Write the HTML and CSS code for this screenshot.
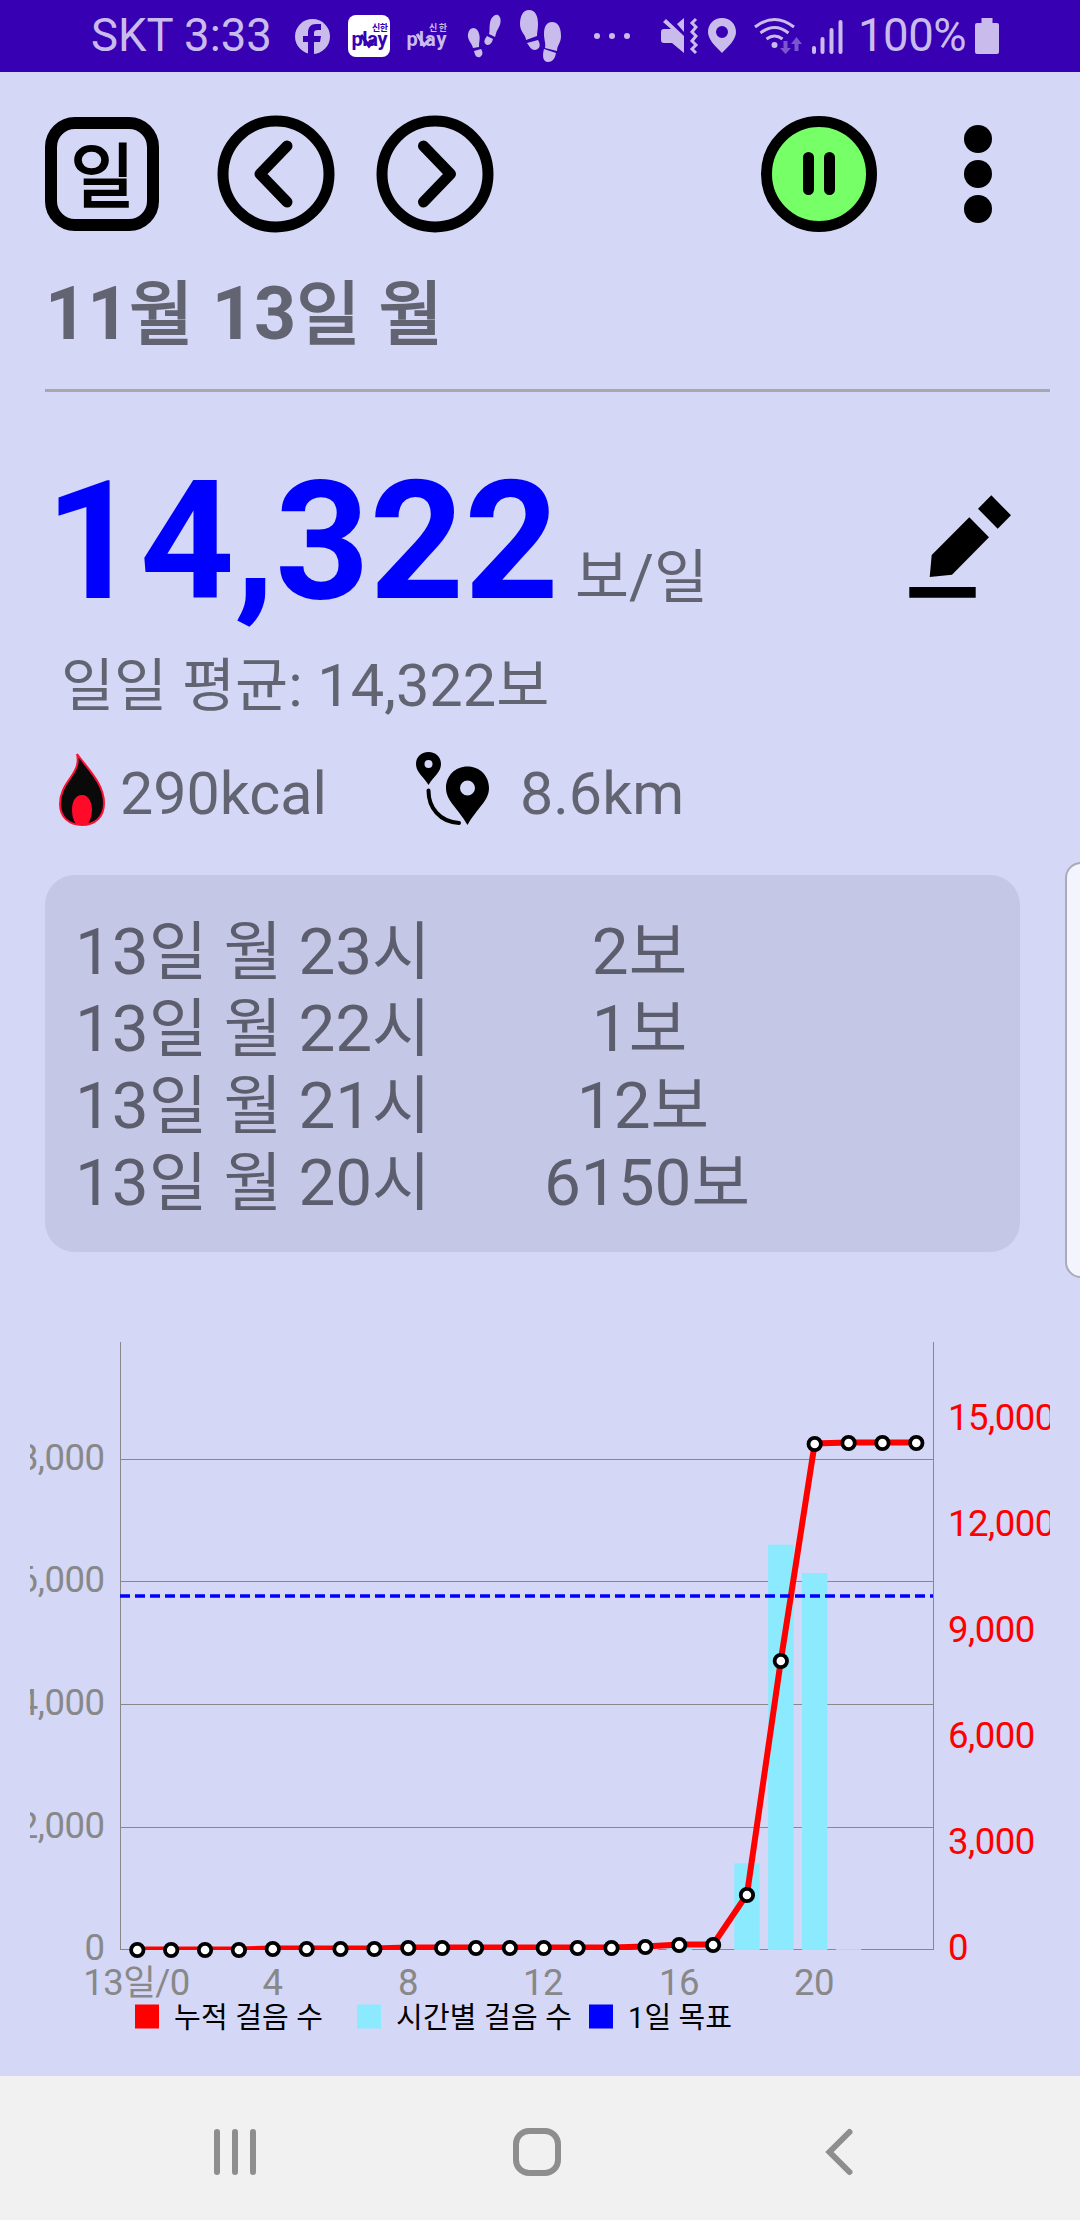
FILE: index.html
```html
<!DOCTYPE html>
<html lang="ko">
<head>
    <meta charset="UTF-8">
    <meta name="viewport" content="width=device-width, initial-scale=1.0">
    <title>만보기</title>
    <link rel="stylesheet" href="styles.css">
</head>
<body>
    <header class="status-bar">
        <span class="carrier">SKT 3:33</span>
        <svg class="status-icons" width="340" height="72" viewBox="290 0 340 72">
            <circle cx="312.500" cy="36.500" r="17.500"/>
            <path class="cut" d="M308 55V42h-5v-6h5v-3c0-6 3-9 8-9h5v6h-3c-3 0-4 1-4 3v3h7l-1 6h-6v13z"/>
            <rect class="badge" x="348" y="15" width="42" height="42" rx="8"/>
            <text class="logo-small cut" x="372" y="30.500" textLength="16">신한</text>
            <text class="logo cut" x="351.500" y="46" textLength="36">play</text>
            <path class="cut-line" d="M361 35l8 11 6-7"/>
            <text class="logo-small" x="429" y="30.500" textLength="18">신한</text>
            <text class="logo" x="406.500" y="46" textLength="40">play</text>
            <path class="logo-line" d="M417 34l7 11 7-7"/>
            <path d="M468 34c1-7 7-8 10-3 3 6 1 10 1 16l-6 1c-1-5-6-8-5-14z"/>
            <path d="M474 51l7-2c2 3 2 6-1 8-4 1-5-2-6-6z"/>
            <path d="M490 23c1-6 5-9 8-8 4 3 3 9 0 14-2 3-2 5-3 8l-6-3c1-3 0-6 1-11z"/>
            <path d="M487 36l6 3c-1 4-3 6-6 6-4-2-3-5 0-9z"/>
            <path d="M520 24c0-8 3-14 9-14 7 0 9 7 9 14 0 5-1 8-1 12l-11 4c0-5-6-8-6-16z"/>
            <path d="M527 43l11-3c3 5 2 9-3 10-4 0-5-3-8-7z"/>
            <path d="M544 34c0-8 3-12 8-12s9 4 9 14c0 7-4 9-4 15l-12-3c1-5-1-8-1-14z"/>
            <path d="M544 49l12 4c-1 6-4 9-8 9-5 0-6-6-4-13z"/>
            <circle cx="597" cy="36" r="3"/>
            <circle cx="612" cy="36" r="3"/>
            <circle cx="627" cy="36" r="3"/>
        </svg>
        <svg class="status-icons status-right" width="186" height="72" viewBox="658 0 186 72">
            <path d="M661 32q0-3 3-3h7l-8-7 3-3 18 17v17l-12-10h-8q-3 0-3-3z"/>
            <path d="M677 24l7-6v14z"/>
            <path class="line" d="M696 19l-4 4 4 4-4 5 4 4-4 5 4 4-4 4 4 4"/>
            <path fill-rule="evenodd" d="M722 18c8 0 14 6 14 14 0 7-6 13-14 21-8-8-14-14-14-21 0-8 6-14 14-14zm0 8a6 6 0 1 0 0 12 6 6 0 0 0 0-12z"/>
            <path class="line" d="M755 27q19.500-15 39 0M760.500 33q14-11 28 0M766.500 39q8-6 16 0"/>
            <circle cx="774.500" cy="45" r="3"/>
            <path class="faint" d="M783.500 41h4v7h3.500l-5.500 6-5.500-6h3.500zM794.500 51h4v-7h3.500l-5.500-7-5.500 7h3.500z"/>
            <path class="signal" d="M814 48v4M822.500 39v13M831.500 30v22M840.500 22v30"/>
        </svg>
        <span class="percent">100%</span>
        <svg class="status-icons" width="24" height="72" viewBox="975 0 24 72">
            <path d="M981.500 18h11v5h4.500q2 0 2 2v27q0 2-2 2h-20q-2 0-2-2V25q0-2 2-2h4.500z"/>
        </svg>
    </header>

    <main class="app">
        <div class="toolbar">
            <button class="day-button">일</button>
            <button class="icon-button prev-button">
                <svg width="118" height="118" viewBox="0 0 118 118">
                    <circle cx="59" cy="59" r="53"/>
                    <path d="M70 31L43 59l27 28"/>
                </svg>
            </button>
            <button class="icon-button">
                <svg width="118" height="118" viewBox="0 0 118 118">
                    <circle cx="59" cy="59" r="53"/>
                    <path d="M47.500 31l27 28-27 28"/>
                </svg>
            </button>
            <button class="icon-button pause-button">
                <svg width="118" height="118" viewBox="0 0 118 118">
                    <circle class="green" cx="59" cy="59" r="52.500"/>
                    <path d="M48.500 42.500v32M69.500 42.500v32"/>
                </svg>
            </button>
            <button class="icon-button menu-button">
                <svg width="30" height="100" viewBox="0 0 30 100">
                    <circle cx="15" cy="15" r="14"/>
                    <circle cx="15" cy="50" r="14"/>
                    <circle cx="15" cy="85" r="14"/>
                </svg>
            </button>
        </div>

        <h1 class="date">11<span class="ko">월</span> 13<span class="ko">일</span> <span class="ko">월</span></h1>

        <section class="summary">
            <div class="steps-row">
                <strong class="steps">14,322</strong>
                <span class="unit"><span class="ko">보</span>/<span class="ko">일</span></span>
                <svg class="edit" width="104" height="104" viewBox="0 0 104 104">
                    <path d="M83.300 1.300l19.700 20-13.300 13.400-19.700-20zM61.300 23.300l19.700 20-37 37.400L21.700 83l2-22zM1.300 93h66.400v10.700H1.300z"/>
                </svg>
            </div>
            <p class="average"><span class="ko">일일</span> <span class="ko">평균</span>: 14,322<span class="ko">보</span></p>
            <div class="metrics">
                <svg class="flame" width="46" height="74" viewBox="0 0 46 74">
                    <path class="flame-outer" d="M18 2c11 15 27 30 27 49 0 14-9 22-22 22S1 65 1 52c0-23 22-30 17-50z"/>
                    <path class="flame-inner" d="M23 43c7 0 10 8 10 15 0 6-2 10-4 14q-6 2-12 0c-3-4-4-9-4-14 0-8 3-15 10-15z"/>
                </svg>
                <span class="metric kcal">290kcal</span>
                <svg class="route" width="74" height="74" viewBox="0 0 74 74">
                    <path fill-rule="evenodd" d="M12.500 0C20 0 25 5 25 12c0 8-7 12-12.500 21C7 24 0 20 0 12 0 5 5 0 12.500 0zm0 8a4 4 0 1 0 0 8 4 4 0 0 0 0-8z"/>
                    <path fill-rule="evenodd" d="M51.500 14.500C64 14.500 73 24 73 36c0 13-12 20-21.500 37C42 56 30 49 30 36c0-12 9-21.500 21.500-21.500zm0 14a7.500 7.500 0 1 0 0 15 7.500 7.500 0 0 0 0-15z"/>
                    <path class="route-line" d="M12.500 38.500C12.500 56 24 70 43 71"/>
                </svg>
                <span class="metric">8.6km</span>
            </div>
        </section>

        <section class="hours">
            <div class="hour"><span>13<span class="ko">일</span> <span class="ko">월</span> 23<span class="ko">시</span></span><span class="count one-digit">2<span class="ko">보</span></span></div>
            <div class="hour"><span>13<span class="ko">일</span> <span class="ko">월</span> 22<span class="ko">시</span></span><span class="count one-digit">1<span class="ko">보</span></span></div>
            <div class="hour"><span>13<span class="ko">일</span> <span class="ko">월</span> 21<span class="ko">시</span></span><span class="count two-digits">12<span class="ko">보</span></span></div>
            <div class="hour"><span>13<span class="ko">일</span> <span class="ko">월</span> 20<span class="ko">시</span></span><span class="count four-digits">6150<span class="ko">보</span></span></div>
        </section>

        <!-- viewBox keeps the chart in page units, starting at the left edge of the labels -->
        <svg class="chart" width="1020" height="720" viewBox="30 1330 1020 720">
            <defs>
                <clipPath id="plot"><rect x="120" y="1342" width="814" height="608"/></clipPath>
            </defs>
            <path class="grid" d="M120 1459.500h813M120 1581.500h813M120 1704.500h813M120 1827.500h813M120 1949.500h813M120.500 1342v608M933.500 1342v608"/>
            <g id="bars" class="bars"></g>
            <polyline id="total" class="total" clip-path="url(#plot)"/>
            <path class="goal" d="M120 1596h813"/>
            <g id="dots" class="dots"></g>
            <g class="left-axis">
                <text x="104.500" y="1470">8,000</text>
                <text x="104.500" y="1592">6,000</text>
                <text x="104.500" y="1715">4,000</text>
                <text x="104.500" y="1838">2,000</text>
                <text x="104.500" y="1960">0</text>
            </g>
            <g class="right-axis">
                <text x="948" y="1430">15,000</text>
                <text x="948" y="1536">12,000</text>
                <text x="948" y="1642">9,000</text>
                <text x="948" y="1748">6,000</text>
                <text x="948" y="1854">3,000</text>
                <text x="948" y="1960">0</text>
            </g>
            <g class="x-axis">
                <text x="136.500" y="1995">13<tspan class="ko">일</tspan>/0</text>
                <text x="272.500" y="1995">4</text>
                <text x="408" y="1995">8</text>
                <text x="543" y="1995">12</text>
                <text x="679" y="1995">16</text>
                <text x="814" y="1995">20</text>
            </g>
            <g class="legend">
                <rect x="135" y="2004.500" width="24" height="24" fill="#ff0000"/>
                <text x="174" y="2027.500" textLength="149">누적 걸음 수</text>
                <rect x="357" y="2004.500" width="24" height="24" fill="#8ceaff"/>
                <text x="396" y="2027.500" textLength="176">시간별 걸음 수</text>
                <rect x="589" y="2004.500" width="24" height="24" fill="#0000ff"/>
                <text x="628" y="2027.500" textLength="104">1일 목표</text>
            </g>
        </svg>
        <div class="edge-panel"></div>
    </main>

    <nav class="nav-bar">
        <svg width="1080" height="144" viewBox="0 2076 1080 144">
            <path d="M217 2132v40M235 2132v40M253 2132v40"/>
            <rect x="516" y="2131" width="42" height="42" rx="13"/>
            <path d="M849.500 2132l-20 20 20 20"/>
        </svg>
    </nav>

    <script>
        // y position of the running total for each hour
        const totals = [1950, 1950, 1950, 1950, 1949, 1949, 1949, 1949, 1948, 1948, 1948, 1948,
            1948, 1948, 1948, 1947, 1945, 1945, 1895, 1661, 1444, 1443, 1443, 1443];
        // top of the hourly bars
        const hourly = { 15: 1949, 16: 1947.5, 18: 1863.3, 19: 1544.7, 20: 1573, 21: 1949 };

        const ns = 'http://www.w3.org/2000/svg';
        const hourX = (hour) => 137.3 + hour * 33.87;

        function add(parent, name, attrs) {
            const el = document.createElementNS(ns, name);
            for (const key in attrs) el.setAttribute(key, attrs[key]);
            document.getElementById(parent).appendChild(el);
        }

        for (const hour in hourly) {
            add('bars', 'rect', { x: hourX(Number(hour)) - 12.7, y: hourly[hour], width: 25.4, height: 1950 - hourly[hour] });
        }

        document.getElementById('total').setAttribute('points',
            totals.map((y, hour) => `${hourX(hour)},${y - 0.5}`).join(' '));

        totals.forEach((y, hour) => add('dots', 'circle', { cx: hourX(hour), cy: y, r: 6.2 }));
    </script>
</body>
</html>
```

FILE: styles.css
```css
body {
    margin: 0;
    width: 1080px;
    height: 2220px;
    overflow: hidden;
    display: flex;
    flex-direction: column;
    background-color: #d4d7f6;
    font-family: Roboto, "Noto Sans CJK KR", sans-serif;
    color: #636472;
}
svg {
    display: block;
    flex: none;
}
.ko {
    font-size: 0.97em;
}
.status-bar {
    display: flex;
    align-items: center;
    height: 72px;
    flex: none;
    background-color: #3700b3;
    color: #c9bcec;
    font-size: 45.5px;
    line-height: 72px;
    white-space: nowrap;
}
.carrier {
    margin-left: 91px;
    width: 199px;
}
.status-icons {
    fill: #c9bcec;
}
.status-right {
    margin-left: 28px;
}
.percent {
    margin-left: 14px;
    width: 117px;
    letter-spacing: -0.5px;
}
.status-icons .cut {
    fill: #3700b3;
}
.badge {
    fill: #ffffff;
}
.logo {
    font-size: 20px;
    font-weight: bold;
}
.logo-small {
    font-size: 9px;
    font-weight: bold;
}
.cut-line, .logo-line {
    fill: none;
    stroke: #3700b3;
    stroke-width: 3;
}
.logo-line {
    stroke: #c9bcec;
}
.line {
    fill: none;
    stroke: #c9bcec;
    stroke-width: 3;
}
.faint {
    fill: #7b54cf;
}
.signal {
    stroke: #c9bcec;
    stroke-width: 4;
    stroke-linecap: round;
}
.app {
    position: relative;
    height: 2004px;
    flex: none;
    overflow: hidden;
}
.toolbar {
    display: flex;
    align-items: center;
    height: 118px;
    padding: 43px 0 0 45px;
}
.toolbar button {
    flex: none;
    padding: 0;
    background: none;
    color: #000;
    font-family: inherit;
}
.toolbar .day-button {
    box-sizing: border-box;
    width: 114px;
    height: 114px;
    padding: 8px 0 0 1px;
    border: 12px solid #000;
    border-radius: 30px;
    font-size: 70px;
    line-height: 82px;
    -webkit-text-stroke: 2px #000;
}
.icon-button {
    border: none;
    fill: none;
    stroke: #000;
    stroke-width: 11;
    stroke-linecap: round;
    stroke-linejoin: round;
}
.prev-button {
    margin: 0 41px 0 58px;
}
.pause-button {
    margin-left: 266px;
}
.green {
    fill: #76ff66;
}
.menu-button {
    margin-left: 85px;
    fill: #000;
    stroke: none;
}
.date {
    margin: 0 30px 0 45px;
    padding-top: 36px;
    height: 120px;
    border-bottom: 3px solid #a8a8a8;
    font-size: 73.5px;
    line-height: 90px;
    font-weight: bold;
}
.date .ko {
    font-size: 0.95em;
    font-weight: normal;
    -webkit-text-stroke: 2px #636472;
}
.summary {
    padding-left: 45px;
}
.steps-row {
    display: flex;
    align-items: baseline;
    height: 240px;
}
.steps {
    font-size: 165px;
    line-height: 299px;
    color: #0000ff;
}
.unit {
    margin-left: 16px;
    font-size: 60.5px;
}
.edit {
    margin-left: auto;
    margin-right: 68px;
}
.average {
    margin: 0 0 0 16px;
    font-size: 59.5px;
    line-height: 108px;
    height: 108px;
}
.metrics {
    display: flex;
    align-items: center;
    height: 98px;
    padding-left: 14px;
    font-size: 59.2px;
}
.metric {
    padding-top: 8px;
}
.kcal {
    margin-left: 15px;
    width: 296px;
}
.flame-outer {
    fill: #0a0a0a;
    stroke: #ff1035;
    stroke-width: 2;
}
.flame-inner {
    fill: #ff0a28;
}
.route-line {
    fill: none;
    stroke: #000;
    stroke-width: 4;
    stroke-linecap: round;
}
.route {
    margin-right: 30px;
}
.hours {
    box-sizing: border-box;
    width: 975px;
    height: 377px;
    margin: 37px 0 0 45px;
    padding: 38px 30px;
    border-radius: 30px;
    background-color: #c4c7e6;
    color: #5c5d6d;
    font-size: 65.6px;
    line-height: 77px;
}
.hour {
    display: grid;
    grid-template-columns: 400px 340px;
    height: 77px;
}
.count {
    text-align: center;
}
.one-digit {
    padding-right: 11px;
}
.two-digits {
    padding-right: 4px;
}
.four-digits {
    padding-left: 4px;
}
.chart {
    margin: 78px 0 0 30px;
    overflow: hidden;
    font-size: 36.5px;
    letter-spacing: -0.5px;
}
.grid {
    fill: none;
    stroke: #888888;
    stroke-width: 1;
}
.bars {
    fill: #8ceaff;
}
.total {
    fill: none;
    stroke: #ff0000;
    stroke-width: 6;
}
.goal {
    fill: none;
    stroke: #0000ff;
    stroke-width: 3.4;
    stroke-dasharray: 10 5;
}
.dots {
    fill: #ffffff;
    stroke: #000000;
    stroke-width: 3.8;
}
.left-axis {
    fill: #888888;
    text-anchor: end;
}
.right-axis {
    fill: #ff0000;
}
.x-axis {
    fill: #888888;
    text-anchor: middle;
}
.legend {
    font-size: 29px;
    letter-spacing: 0;
    fill: #000000;
}
.edge-panel {
    position: absolute;
    left: 1065px;
    top: 790px;
    width: 40px;
    height: 412px;
    border: 2px solid #aaabb8;
    border-radius: 16px;
    background-color: #f4f4fe;
}
.nav-bar {
    height: 144px;
    flex: none;
    background-color: #f1f1f1;
    fill: none;
    stroke: #8e8e8e;
    stroke-width: 6;
    stroke-linecap: round;
}
```
